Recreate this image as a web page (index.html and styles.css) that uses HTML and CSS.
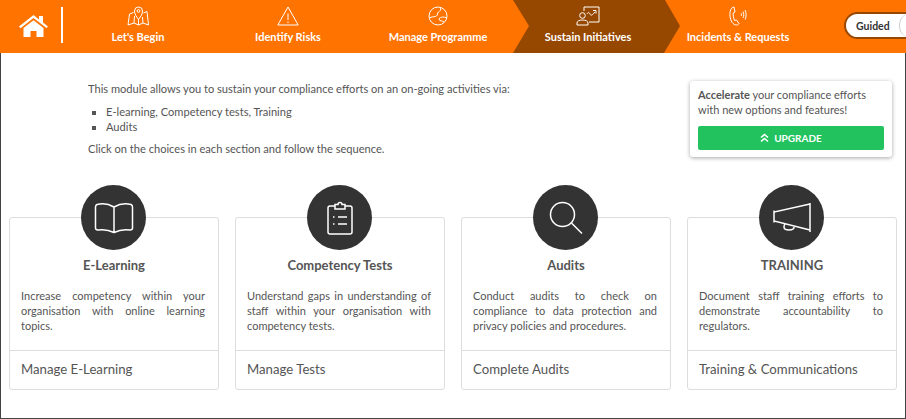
FILE: index.html

```html
<!DOCTYPE html>
<html lang="en">
<head>
    <meta charset="UTF-8">
    <meta name="viewport" content="width=device-width, initial-scale=1.0">
    <title>Sustain Initiatives</title>
    <link rel="stylesheet" href="styles.css">
</head>
<body>
<header class="topbar">
    <a class="home" href="#">
        <svg width="29" height="22" viewBox="0 0 29 22"><path d="M0 11.500 14.500 0 20 4.400V1h4v6.500l5 4-1.500 1.600L14.500 3 1.500 13.200z" fill="#fff"/><path d="M4.500 13 14.500 5.200 24.500 13v9H17.500v-6h-6v6h-7z" fill="#fff"/></svg>
    </a>
    <nav class="steps">
        <a class="step" href="#">
            <svg class="step-icon" width="24" height="20" viewBox="0 0 24 20"><path d="M7.500 6.500 3.500 8 2 19l6-2 4.500 2 4.500-2 5.500 2L21 5.500l-3.500 1.500M8 17 8.500 10M17 17l-.5-6M12.500 19v-6"/><path d="M12.500 13.500C10 10 8.500 8 8.500 5a4 4 0 0 1 8 0c0 3-1.500 5-4 8.500z"/><circle cx="12.500" cy="5" r="1.400"/></svg>
            <span>Let's Begin</span>
        </a>
        <a class="step" href="#">
            <svg class="step-icon" width="24" height="20" viewBox="0 0 24 20"><path d="M12 1 1.800 19h20.400z"/><path d="M12 7.500v6.500M12 15.500v1.500"/></svg>
            <span>Identify Risks</span>
        </a>
        <a class="step" href="#">
            <svg class="step-icon" width="24" height="20" viewBox="0 0 24 20"><circle cx="12" cy="10" r="9"/><path d="M14.500 1.500c1 2.500-.5 3.500-2 4.500s-.5 3-2 4-3.500.500-6.500 1.500M20.500 12c-2.500-1.500-4.500-1-6-.5s-2 2.500-.5 3 3 .5 4 1.500"/></svg>
            <span>Manage Programme</span>
        </a>
        <a class="step step-active" href="#">
            <svg class="step-icon" width="24" height="20" viewBox="0 0 24 20"><path d="M8 5V1h15v15H13"/><circle cx="6.500" cy="9.500" r="2.800"/><path d="M1 19v-2c0-2 2.500-3 5.500-3s5.500 1 5.500 3v2zM11 8c1-2 2-2 3 0s2 1.500 5-2M17 4.500h3v3"/></svg>
            <span>Sustain Initiatives</span>
        </a>
        <a class="step" href="#">
            <svg class="step-icon" width="24" height="20" viewBox="0 0 24 20"><path d="M8 1C5 1.500 3.500 5 4 10s3 9 6.500 9c1 0 2-.5 2.500-1.500L10.500 14l-2 .5C7.500 12 7 9 7.200 7L9 6z"/><path d="M15 7c.6 1 .6 2 0 3M17 5.500c1 2 1 4.500 0 6.500M19 4c1.500 2.500 1.500 7 0 9.500"/></svg>
            <span>Incidents &amp; Requests</span>
        </a>
    </nav>
    <div class="toggle">
        <span class="toggle-label">Guided</span>
        <span class="toggle-knob"></span>
    </div>
</header>

<main class="content">
    <section class="intro">
        <div class="intro-text">
            <p>This module allows you to sustain your compliance efforts on an on-going activities via:</p>
            <ul>
                <li>E-learning, Competency tests, Training</li>
                <li>Audits</li>
            </ul>
            <p>Click on the choices in each section and follow the sequence.</p>
        </div>
        <aside class="upgrade">
            <p><b>Accelerate</b> your compliance efforts with new options and features!</p>
            <a class="upgrade-btn" href="#">
                <svg width="9" height="10" viewBox="0 0 9 10"><path d="M1 4.500 4.500 1.500 8 4.500M1 8.500 4.500 5.500 8 8.500" fill="none" stroke="#fff" stroke-width="1.600"/></svg>
                UPGRADE
            </a>
        </aside>
    </section>

    <section class="cards">
        <div class="card">
            <div class="card-circle">
                <svg width="40" height="32" viewBox="0 0 40 32"><path d="M20 5C15 2 8 1 3 2.500 2 3 1.500 3.500 1.500 5v21c0 1.500 1 2 2.500 2 6-1 11 0 16 2.500 5-2.500 10-3.500 16-2.500 1.500 0 2.500-.5 2.500-2V5c0-1.500-.5-2-1.500-2.500C32 1 25 2 20 5zM20 5v25.500"/></svg>
            </div>
            <h3>E-Learning</h3>
            <p>Increase competency within your organisation with online learning topics.</p>
            <a class="card-link" href="#">Manage E-Learning</a>
        </div>
        <div class="card">
            <div class="card-circle">
                <svg width="26" height="34" viewBox="0 0 26 34"><path d="M8 5H3C2 5 1 6 1 7v24c0 1 1 2 2 2h20c1 0 2-1 2-2V7c0-1-1-2-2-2h-5M8 3.500h3a2 2 0 0 1 4 0h3V8H8z"/><path d="M11 16h9M11 23h9"/><path d="M6 16h1.500M6 23h1.500"/></svg>
            </div>
            <h3>Competency Tests</h3>
            <p>Understand gaps in understanding of staff within your organisation with competency tests.</p>
            <a class="card-link" href="#">Manage Tests</a>
        </div>
        <div class="card">
            <div class="card-circle">
                <svg width="34" height="34" viewBox="0 0 34 34"><circle cx="13.500" cy="13.500" r="12"/><path d="M22.500 22 33 32.500"/></svg>
            </div>
            <h3>Audits</h3>
            <p>Conduct audits to check on compliance to data protection and privacy policies and procedures.</p>
            <a class="card-link" href="#">Complete Audits</a>
        </div>
        <div class="card">
            <div class="card-circle">
                <svg width="40" height="32" viewBox="0 0 40 32"><path d="M38 1v29M38 2 2 10v9l36 9M2 8.500v12M13 22c-1 1-1 2-1 3 0 2 2 3 5 3s5-1 5-3"/></svg>
            </div>
            <h3>TRAINING</h3>
            <p>Document staff training efforts to demonstrate accountability to regulators.</p>
            <a class="card-link" href="#">Training &amp; Communications</a>
        </div>
    </section>
</main>
</body>
</html>
```

FILE: styles.css

```css
body {
    font-family: "Lato", "Noto Sans", sans-serif;
    color: #555;
    background-color: #fff;
    margin: 0;
    padding: 0;
}

a {
    text-decoration: none;
    color: inherit;
}

.topbar {
    display: flex;
    height: 53px;
    background-color: #ff7300;
    color: #fff;
}

.home {
    display: flex;
    align-items: center;
    box-sizing: border-box;
    width: 63px;
    height: 36px;
    margin-top: 7px;
    padding-left: 19px;
    padding-top: 1px;
    border-right: 2px solid #fff;
}

.steps {
    display: flex;
}

.step {
    position: relative;
    display: flex;
    flex-direction: column;
    align-items: center;
    width: 150px;
    padding-top: 6px;
    box-sizing: border-box;
    font-size: 11px;
    font-weight: 700;
}

.step span {
    position: relative;
    margin-top: 3px;
    line-height: 16px;
}

.step-icon {
    position: relative;
    fill: none;
    stroke: #fff;
    stroke-width: 1;
}

.step-active::before {
    content: "";
    position: absolute;
    top: 0;
    bottom: 0;
    left: 0;
    right: -17px;
    background-color: #974800;
    clip-path: polygon(0 0, 152px 0, 167px 26px, 151px 100%, 0 100%, 16px 26px);
}

.toggle {
    display: flex;
    align-items: center;
    box-sizing: border-box;
    width: 62px;
    height: 27px;
    margin: 12px 0 0 31px;
    padding-left: 10px;
    border: 2px solid #974800;
    border-right: 0;
    border-radius: 14px 0 0 14px;
    background-color: #fff;
    overflow: hidden;
}

.toggle-label {
    font-size: 10.500px;
    font-weight: 700;
    color: #333;
}

.toggle-knob {
    flex: none;
    width: 20px;
    height: 23px;
    margin-left: 9px;
    border-left: 1px solid #ccc;
    border-radius: 12px;
}

.content {
    box-sizing: border-box;
    height: 366px;
    border-left: 1px solid #444;
    border-right: 1px solid #444;
    border-bottom: 1px solid #444;
}

.intro {
    display: flex;
    justify-content: space-between;
    height: 131px;
    padding: 28px 13px 0 87px;
    box-sizing: border-box;
}

.intro-text {
    font-size: 11.100px;
    line-height: 15px;
}

.intro-text p {
    margin: 0;
}

.intro-text ul {
    margin: 8px 0 7px;
    padding-left: 18px;
    list-style-type: square;
}

.upgrade {
    box-sizing: border-box;
    width: 202px;
    height: 76px;
    padding: 6px 8px 8px;
    border-radius: 3px;
    box-shadow: 0 1px 4px rgba(0, 0, 0, 0.35);
    font-size: 11px;
    line-height: 15px;
}

.upgrade p {
    margin: 0 0 9px;
}

.upgrade-btn {
    display: flex;
    align-items: center;
    justify-content: center;
    gap: 5px;
    height: 24px;
    border-radius: 2px;
    background-color: #22c35e;
    color: #fff;
    font-size: 10px;
    font-weight: 700;
}

.cards {
    display: grid;
    grid-template-columns: repeat(4, 210px);
    gap: 16px;
    padding: 33px 0 0 8px;
}

.card {
    position: relative;
    display: flex;
    flex-direction: column;
    box-sizing: border-box;
    height: 173px;
    border: 1px solid #ddd;
    border-radius: 3px;
}

.card-circle {
    position: absolute;
    top: -33px;
    left: 71px;
    display: flex;
    align-items: center;
    justify-content: center;
    width: 65px;
    height: 65px;
    border-radius: 50%;
    background-color: #333;
}

.card-circle svg {
    fill: none;
    stroke: #fff;
    stroke-width: 1.500;
}

.card h3 {
    margin: 38px 0 0;
    font-size: 13px;
    line-height: 18px;
    text-align: center;
    color: #555;
}

.card p {
    flex: 1;
    margin: 14px 13px 0 11px;
    font-size: 11px;
    line-height: 15px;
    text-align: justify;
}

.card-link {
    display: block;
    height: 38px;
    padding-left: 11px;
    border-top: 1px solid #ddd;
    font-size: 13.200px;
    line-height: 36px;
}
```
